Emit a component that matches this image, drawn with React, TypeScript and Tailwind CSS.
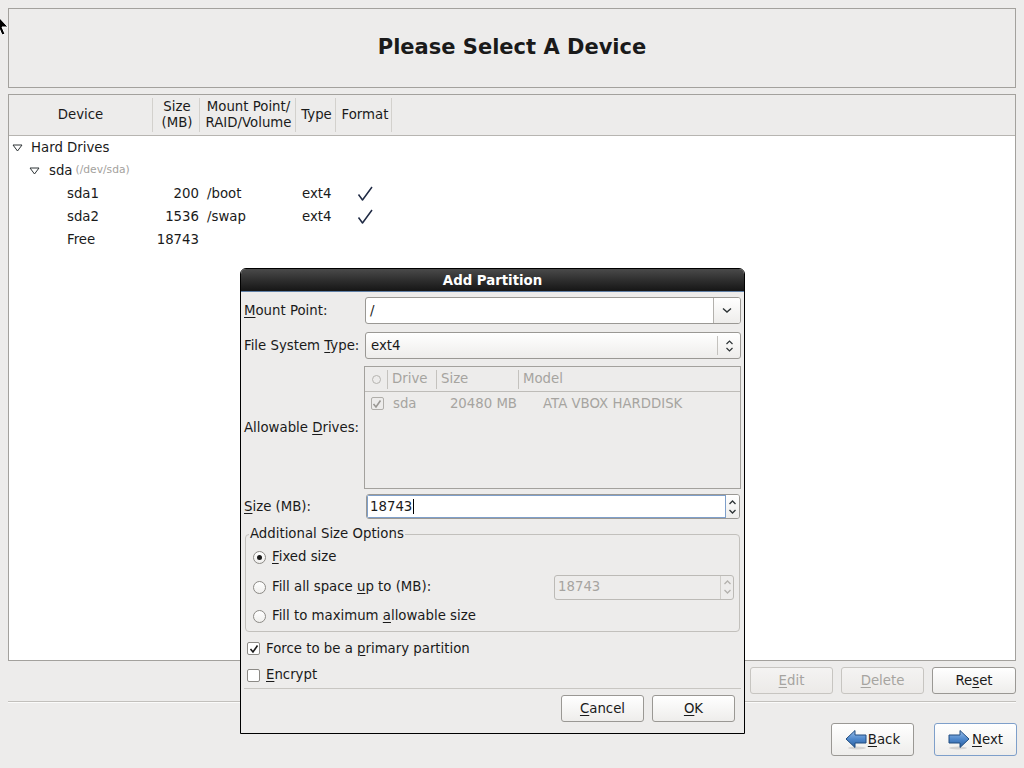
import React from "react";

function U({ children }: { children: React.ReactNode }) {
  return <span className="underline decoration-1 underline-offset-[2px]">{children}</span>;
}

function Btn({
  children,
  className = "",
  disabled = false,
  focus = false,
}: {
  children: React.ReactNode;
  className?: string;
  disabled?: boolean;
  focus?: boolean;
}) {
  const tone = disabled
    ? "border-[#c7c5c1] text-[#a6a4a0] from-[#f4f3f2] to-[#eceae8]"
    : focus
      ? "border-[#7e9fca] text-[#1a1a1a] from-white to-[#eeedeb]"
      : "border-[#9a9894] text-[#1a1a1a] from-white to-[#eeedeb]";
  return (
    <div
      className={`flex items-center justify-center rounded-[3px] border bg-linear-to-b ${tone} ${className}`}
    >
      {children}
    </div>
  );
}

function Check() {
  return (
    <svg width="18" height="17" viewBox="0 0 18 17">
      <path d="M2.5 9.5 L6.5 15 L16 2" fill="none" stroke="#1f2a44" strokeWidth="1.5" strokeLinejoin="round" />
    </svg>
  );
}

function CheckBox({ checked, disabled = false }: { checked: boolean; disabled?: boolean }) {
  return (
    <div
      className={`flex h-[13px] w-[13px] items-center justify-center rounded-[2px] border ${
        disabled ? "border-[#b0aeaa] bg-[#edeceb]" : "border-[#8c8a86] bg-white"
      }`}
    >
      {checked && (
        <svg width="10" height="10" viewBox="0 0 10 10">
          <path
            d="M1.5 5 L4 8 L8.5 1.5"
            fill="none"
            stroke={disabled ? "#9a9894" : "#1a1a1a"}
            strokeWidth="1.6"
          />
        </svg>
      )}
    </div>
  );
}

function Radio({ on }: { on: boolean }) {
  return (
    <div className="flex h-[13px] w-[13px] items-center justify-center rounded-full border border-[#8c8a86] bg-linear-to-b from-white to-[#f0efed]">
      {on && <div className="h-[5px] w-[5px] rounded-full bg-[#1a1a1a]" />}
    </div>
  );
}

function Triangle() {
  return (
    <svg width="11" height="8" viewBox="0 0 11 8">
      <path d="M1 1 H10 L5.5 7 Z" fill="none" stroke="#2e3436" strokeWidth="1" />
    </svg>
  );
}

function SpinArrows({ disabled = false }: { disabled?: boolean }) {
  const c = disabled ? "#b3b1ad" : "#2e3436";
  return (
    <svg width="9" height="20" viewBox="0 0 9 20">
      <path d="M1.5 7 L4.5 4 L7.5 7" fill="none" stroke={c} strokeWidth="1.3" />
      <path d="M1.5 13 L4.5 16 L7.5 13" fill="none" stroke={c} strokeWidth="1.3" />
    </svg>
  );
}

function Arrow({ dir }: { dir: "left" | "right" }) {
  const id = `g-${dir}`;
  return (
    <svg width="22" height="21" viewBox="0 0 22 21" className={dir === "right" ? "-scale-x-100" : ""}>
      <defs>
        <linearGradient id={id} x1="0" y1="0" x2="0" y2="1">
          <stop offset="0" stopColor="#9cc0ea" />
          <stop offset="0.5" stopColor="#4f88cc" />
          <stop offset="1" stopColor="#2a5f9f" />
        </linearGradient>
      </defs>
      <ellipse cx="12" cy="19" rx="9" ry="1.5" fill="#000" opacity="0.12" />
      <path d="M1 10 L10 1.5 L10 6 L21 6 L21 14 L10 14 L10 18.5 Z" fill={`url(#${id})`} stroke="#204c80" strokeWidth="1" strokeLinejoin="round" />
    </svg>
  );
}

export default function App() {
  return (
    <div className="relative h-[768px] w-[1024px] overflow-hidden bg-[#edeceb] font-['DejaVu_Sans',sans-serif] text-[13.3px] text-[#1a1a1a]">
      <div className="flex h-full flex-col px-2 pt-2">
        {/* Title */}
        <div className="flex h-[80px] items-center justify-center border border-[#a3a19d]">
          <h1 className="text-[21px] font-bold">Please Select A Device</h1>
        </div>

        {/* Device tree */}
        <div className="mt-[6px] flex h-[567px] flex-col border border-[#a3a19d] bg-white">
          <div className="flex h-[41px] border-b border-[#b7b5b1] bg-[#edeceb] leading-[16px]">
            <div className="my-[3px] flex w-[144px] items-center justify-center border-r border-[#d3d1cd]">Device</div>
            <div className="my-[3px] flex w-[47px] flex-col items-center justify-center border-r border-[#d3d1cd] pl-[2px]">
              <span>Size</span>
              <span>(MB)</span>
            </div>
            <div className="my-[3px] flex w-[96px] flex-col items-center justify-center border-r border-[#d3d1cd] pl-[2px]">
              <span>Mount Point/</span>
              <span>RAID/Volume</span>
            </div>
            <div className="my-[3px] flex w-[40px] items-center justify-center border-r border-[#d3d1cd] pl-[2px]">Type</div>
            <div className="my-[3px] flex w-[56px] items-center justify-center border-r border-[#d3d1cd] pl-[3px]">Format</div>
          </div>
          <div className="flex flex-col">
            <div className="flex h-[23px] items-center">
              <div className="ml-[3px] w-[19px]">
                <Triangle />
              </div>
              <span>Hard Drives</span>
            </div>
            <div className="flex h-[23px] items-center">
              <div className="ml-[20px] w-[20px]">
                <Triangle />
              </div>
              <span>sda</span>
              <span className="ml-[3px] text-[10.7px] text-[#a3a19d]">(/dev/sda)</span>
            </div>
            {[
              { d: "sda1", s: "200", m: "/boot", t: "ext4", f: true },
              { d: "sda2", s: "1536", m: "/swap", t: "ext4", f: true },
              { d: "Free", s: "18743", m: "", t: "", f: false },
            ].map((r) => (
              <div key={r.d} className="flex h-[23px] items-center">
                <div className="w-[144px] pl-[58px]">{r.d}</div>
                <div className="w-[47px] pr-[1px] text-right">{r.s}</div>
                <div className="w-[96px] pl-[7px]">{r.m}</div>
                <div className="w-[40px] pl-[6px]">{r.t}</div>
                <div className="flex w-[56px] justify-center pl-[2px]">{r.f && <Check />}</div>
              </div>
            ))}
          </div>
        </div>

        {/* Edit buttons */}
        <div className="mt-[6px] flex h-[27px] justify-end gap-[8px]">
          <Btn disabled className="w-[83px]">
            <U>E</U>dit
          </Btn>
          <Btn disabled className="w-[83px]">
            <U>D</U>elete
          </Btn>
          <Btn className="w-[84px]">
            Re<U>s</U>et
          </Btn>
        </div>

        <div className="mt-[7px] h-px bg-[#c2c0bc]" />
        <div className="h-px bg-[#fbfbfa]" />

        {/* Navigation */}
        <div className="-mr-px mt-[20px] flex h-[33px] justify-end gap-[20px]">
          <Btn className="w-[83px] gap-[1px]">
            <Arrow dir="left" />
            <span>
              <U>B</U>ack
            </span>
          </Btn>
          <Btn focus className="w-[83px] gap-[2px]">
            <Arrow dir="right" />
            <span>
              <U>N</U>ext
            </span>
          </Btn>
        </div>
      </div>

      {/* Mouse pointer */}
      <svg className="absolute left-[-6px] top-[12px]" width="16" height="26" viewBox="0 0 16 26">
        <path d="M1 1 L1 20 L5 16 L8 23 L11 22 L8 15 L14 15 Z" fill="#000" stroke="#fff" strokeWidth="1" />
      </svg>

      {/* Add Partition dialog */}
      <div className="absolute left-[240px] top-[268px] flex h-[466px] w-[505px] flex-col overflow-hidden rounded-t-[6px] border border-black bg-[#edeceb]">
        <div className="flex h-[23px] items-center justify-center border-b border-[#5f7fa6] bg-linear-to-b from-[#4a4a4a] to-[#161616] pt-[2px] font-bold text-white">
          Add Partition
        </div>

        <div className="flex flex-col px-[3px]">
          {/* Mount point */}
          <div className="mt-[5px] flex h-[27px] items-center">
            <div className="w-[121px]">
              <U>M</U>ount Point:
            </div>
            <div className="flex h-full flex-1 overflow-hidden rounded-[3px] border border-[#9a9894] bg-white">
              <div className="flex flex-1 items-center pl-[4px]">/</div>
              <div className="flex w-[27px] items-center justify-center border-l border-[#b3b1ad] bg-linear-to-b from-white to-[#eeedeb]">
                <svg width="10" height="7" viewBox="0 0 10 7">
                  <path d="M1 1.5 L5 5 L9 1.5" fill="none" stroke="#2e3436" strokeWidth="1.4" />
                </svg>
              </div>
            </div>
          </div>

          {/* File system type */}
          <div className="mt-[8px] flex h-[27px] items-center">
            <div className="w-[121px]">
              File System <U>T</U>ype:
            </div>
            <div className="flex h-full flex-1 items-center rounded-[3px] border border-[#9a9894] bg-linear-to-b from-white to-[#eeedeb]">
              <div className="flex-1 pl-[5px]">ext4</div>
              <div className="h-[19px] w-px bg-[#c4c2be]" />
              <div className="flex w-[22px] justify-center">
                <svg width="9" height="16" viewBox="0 0 9 16">
                  <path d="M1.5 6 L4.5 3 L7.5 6" fill="none" stroke="#2e3436" strokeWidth="1.2" />
                  <path d="M1.5 10 L4.5 13 L7.5 10" fill="none" stroke="#2e3436" strokeWidth="1.2" />
                </svg>
              </div>
            </div>
          </div>

          {/* Allowable drives */}
          <div className="mt-[7px] flex h-[123px] items-center">
            <div className="w-[120px]">
              Allowable <U>D</U>rives:
            </div>
            <div className="flex h-full flex-1 flex-col border border-[#a3a19d] bg-[#edeceb] text-[#a6a4a0]">
              <div className="flex h-[25px] items-center border-b border-[#bebcb8]">
                <div className="flex w-[22px] justify-center">
                  <div className="h-[9px] w-[9px] rounded-full border border-[#b6b4b0]" />
                </div>
                <div className="h-[19px] w-px bg-[#c4c2be]" />
                <div className="w-[48px] pl-[4px]">Drive</div>
                <div className="h-[19px] w-px bg-[#c4c2be]" />
                <div className="w-[81px] pl-[4px]">Size</div>
                <div className="h-[19px] w-px bg-[#c4c2be]" />
                <div className="pl-[4px]">Model</div>
              </div>
              <div className="flex h-[23px] items-center">
                <div className="flex w-[23px] justify-center pl-[1px]">
                  <CheckBox checked disabled />
                </div>
                <div className="w-[49px] pl-[5px]">sda</div>
                <div className="w-[82px] pr-[2px] text-right">20480 MB</div>
                <div className="pl-[24px]">ATA VBOX HARDDISK</div>
              </div>
            </div>
          </div>

          {/* Size */}
          <div className="mt-[5px] flex h-[25px] items-center">
            <div className="w-[122px]">
              <U>S</U>ize (MB):
            </div>
            <div className="flex h-full flex-1 overflow-hidden rounded-[3px] border border-[#9a9894]">
              <div className="flex flex-1 items-center border border-[#7e9fca] bg-white pl-[2px]">
                18743
                <span className="ml-px h-[15px] w-px bg-black" />
              </div>
              <div className="flex w-[13px] items-center justify-center bg-linear-to-b from-white to-[#eeedeb]">
                <SpinArrows />
              </div>
            </div>
            <div className="w-[1px]" />
          </div>

          {/* Additional size options */}
          <fieldset className="mx-[1px] mt-[7px] rounded-[4px] border border-[#c2c0bc] pb-[1px]">
            <legend className="ml-[3px] px-px leading-[16px]">Additional Size Options</legend>
            <div className="flex h-[30px] items-center pl-[7px]">
              <Radio on />
              <span className="ml-[6px]">
                <U>F</U>ixed size
              </span>
            </div>
            <div className="flex h-[30px] items-center pl-[7px]">
              <Radio on={false} />
              <span className="ml-[6px] flex-1">
                Fill all space <U>u</U>p to (MB):
              </span>
              <div className="mr-[5px] flex h-[25px] w-[180px] overflow-hidden rounded-[3px] border border-[#bcbab6]">
                <div className="flex flex-1 items-center pl-[3px] text-[#a6a4a0]">18743</div>
                <div className="flex w-[13px] items-center justify-center border-l border-[#cfcdc9]">
                  <SpinArrows disabled />
                </div>
              </div>
            </div>
            <div className="flex h-[28px] items-center pl-[7px]">
              <Radio on={false} />
              <span className="ml-[6px]">
                Fill to maximum <U>a</U>llowable size
              </span>
            </div>
          </fieldset>

          {/* Checkboxes */}
          <div className="mt-[3px] flex h-[27px] items-center pl-[3px]">
            <CheckBox checked />
            <span className="ml-[6px]">
              Force to be a <U>p</U>rimary partition
            </span>
          </div>
          <div className="flex h-[26px] items-center pl-[3px]">
            <CheckBox checked={false} />
            <span className="ml-[6px]">
              <U>E</U>ncrypt
            </span>
          </div>

          <div className="h-px bg-[#c8c6c2]" />

          <div className="mt-[6px] flex h-[27px] justify-end gap-[8px] pr-[6px]">
            <Btn className="w-[83px]">
              <U>C</U>ancel
            </Btn>
            <Btn className="w-[83px]">
              <U>O</U>K
            </Btn>
          </div>
        </div>
      </div>
    </div>
  );
}
